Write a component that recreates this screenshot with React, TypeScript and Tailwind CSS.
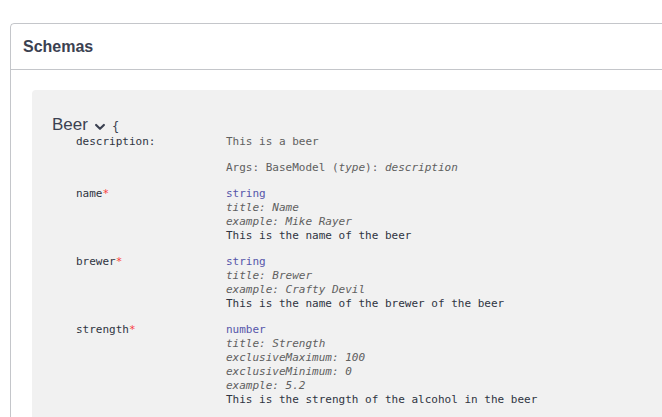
import React from 'react';

const MONO = "font-['DejaVu_Sans_Mono',monospace]";

type Prop = {
    name: string;
    required?: boolean;
    type: string;
    meta: string[];
    desc: string;
};

const PROPS: Prop[] = [
    {
        name: 'name',
        required: true,
        type: 'string',
        meta: ['title: Name', 'example: Mike Rayer'],
        desc: 'This is the name of the beer',
    },
    {
        name: 'brewer',
        required: true,
        type: 'string',
        meta: ['title: Brewer', 'example: Crafty Devil'],
        desc: 'This is the name of the brewer of the beer',
    },
    {
        name: 'strength',
        required: true,
        type: 'number',
        meta: ['title: Strength', 'exclusiveMaximum: 100', 'exclusiveMinimum: 0', 'example: 5.2'],
        desc: 'This is the strength of the alcohol in the beer',
    },
];

const Chevron = () => (
    <svg width="12" height="12" viewBox="0 0 20 20" className="mx-[6px] mt-[3px]">
        <path d="M3.5 6.5 L10 13 L16.5 6.5" fill="none" stroke="#3b4151" strokeWidth="3.6" strokeLinecap="round" strokeLinejoin="round" />
    </svg>
);

export default function App() {
    return (
        <div className="w-[662px] h-[417px] overflow-hidden bg-white">
            <section className="mt-[23px] ml-[10px] w-[720px] h-[500px] border border-[rgba(59,65,81,0.3)] rounded-[4px]">
                {/* Header */}
                <div className="h-[46px] flex items-center pl-[12px] border-b border-[rgba(59,65,81,0.3)]">
                    <h4 className="font-['Liberation_Sans',Arial,sans-serif] font-bold text-[16px] text-[#3b4151]">Schemas</h4>
                </div>

                {/* Model container */}
                <div className="mt-[20px] ml-[21px] bg-[#f1f1f1] rounded-[4px] pt-[25px] pl-[20px] h-[400px]">
                    <div className="flex items-center h-[20px]">
                        <span className="font-['Liberation_Sans',Arial,sans-serif] text-[17px] text-[#3b4151] leading-[20px]">Beer</span>
                        <Chevron />
                        <span className={`${MONO} text-[12px] text-[#3b4151] mt-[3px]`}>{'{'}</span>
                    </div>

                    <div className={`${MONO} text-[11px] leading-[14px] pl-[24px] flex flex-col gap-[12px]`}>
                        {/* description row */}
                        <div className="flex">
                            <div className="w-[150px] text-[#2f3442] font-medium">description:</div>
                            <div className="flex flex-col gap-[12px] text-[#606060]">
                                <div>This is a beer</div>
                                <div>
                                    Args: BaseModel (<i>type</i>): <i>description</i>
                                </div>
                            </div>
                        </div>

                        {PROPS.map((p) => (
                            <div key={p.name} className="flex">
                                <div className="w-[150px] text-[#2f3442] font-medium">
                                    {p.name}
                                    {p.required && <span className="text-[#f93e3e]">*</span>}
                                </div>
                                <div className="flex flex-col">
                                    <span className="text-[#55a]">{p.type}</span>
                                    {p.meta.map((m) => (
                                        <span key={m} className="italic text-[#606060]">{m}</span>
                                    ))}
                                    <span className="text-[#2f3442]">{p.desc}</span>
                                </div>
                            </div>
                        ))}
                    </div>
                </div>
            </section>
        </div>
    );
}
